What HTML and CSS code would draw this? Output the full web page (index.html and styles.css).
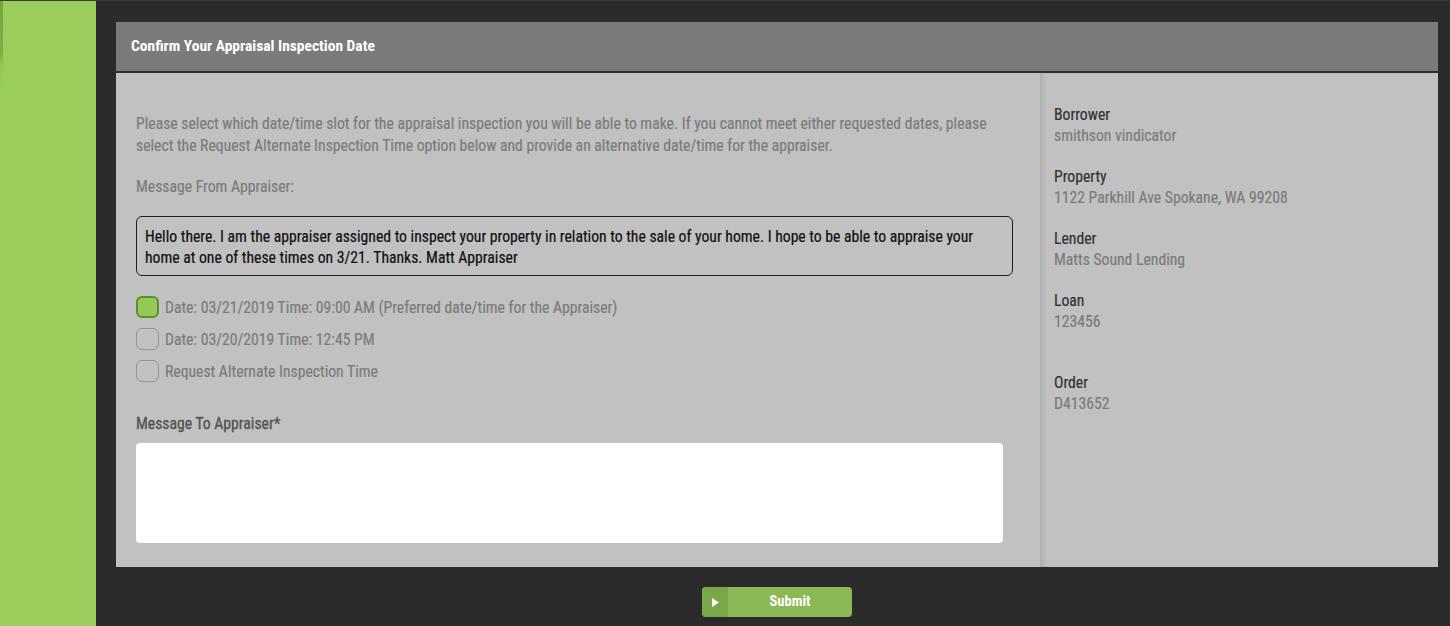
FILE: index.html
```html
<!DOCTYPE html>
<html>
<head>
<meta charset="utf-8">
<link rel="stylesheet" href="styles.css">
</head>
<body>
<div class="page">
  <aside class="sidebar"><div class="sidebar-edge"></div></aside>
  <main class="main">
    <section class="panel">
      <header class="panel-head">Confirm Your Appraisal Inspection Date</header>
      <div class="panel-body">
        <div class="form-col">
          <p class="intro">Please select which date/time slot for the appraisal inspection you will be able to make. If you cannot meet either requested dates, please select the Request Alternate Inspection Time option below and provide an alternative date/time for the appraiser.</p>
          <p class="from-label">Message From Appraiser:</p>
          <div class="message">Hello there. I am the appraiser assigned to inspect your property in relation to the sale of your home. I hope to be able to appraise your home at one of these times on 3/21. Thanks. Matt Appraiser</div>
          <ul class="options">
            <li class="option"><span class="box checked"></span>Date: 03/21/2019 Time: 09:00 AM (Preferred date/time for the Appraiser)</li>
            <li class="option"><span class="box"></span>Date: 03/20/2019 Time: 12:45 PM</li>
            <li class="option"><span class="box"></span>Request Alternate Inspection Time</li>
          </ul>
          <label class="to-label">Message To Appraiser*</label>
          <div class="textarea"></div>
        </div>
        <div class="info-col">
          <div class="info"><div class="info-label">Borrower</div><div class="info-value">smithson vindicator</div></div>
          <div class="info"><div class="info-label">Property</div><div class="info-value">1122 Parkhill Ave Spokane, WA 99208</div></div>
          <div class="info"><div class="info-label">Lender</div><div class="info-value">Matts Sound Lending</div></div>
          <div class="info"><div class="info-label">Loan</div><div class="info-value">123456</div></div>
          <div class="info info-gap"><div class="info-label">Order</div><div class="info-value">D413652</div></div>
        </div>
      </div>
    </section>
    <div class="actions">
      <button class="submit"><span class="submit-icon"><svg width="7" height="9" viewBox="0 0 7 9"><path d="M0 0 L7 4.5 L0 9 Z" fill="#fff"/></svg></span><span class="submit-text">Submit</span></button>
    </div>
  </main>
</div>
</body>
</html>
```
FILE: styles.css
```css
* { box-sizing: border-box; }
html, body { margin: 0; padding: 0; }
body {
  background: #2b2b2b;
  font-family: "Roboto Condensed", "DejaVu Sans Condensed", "Liberation Sans Narrow", Roboto, sans-serif;
  font-size: 15.7px;
  height: 626px;
  overflow: hidden;
  -webkit-text-stroke: 0.2px;
}
.page { display: flex; height: 626px; border-top: 1px solid #3a3a3a; }
.sidebar {
  width: 96px;
  flex: none;
  background: #9ccc5b;
}
.sidebar-edge {
  width: 3px;
  height: 96px;
  background: linear-gradient(#6fa63c 0%, #78b243 55%, #8fd04f 70%, #9ccc5b 100%);
}
.main { flex: 1; padding: 21px 12px 0 20px; display: flex; flex-direction: column; }
.panel { background: #c1c1c1; }
.panel-head {
  background: #7b7b7b;
  color: #fff;
  font-weight: 700;
  font-size: 15.5px;
  height: 51px;
  line-height: 49px;
  padding-left: 15px;
  border-bottom: 2px solid #2e2e2e;
  -webkit-text-stroke: 0;
}
.panel-body { display: flex; height: 494px; }
.form-col { width: 924px; padding: 40px 0 0 20px; }
.intro { margin: 0; color: #7c7c7c; line-height: 22px; width: 870px; }
.from-label { margin: 19px 0 0; color: #7c7c7c; line-height: 22px; }
.message {
  margin-top: 18px;
  width: 877px;
  border: 1px solid #1e1e1e;
  border-radius: 6px;
  padding: 9px 8px 7px;
  color: #111;
  line-height: 21px;
}
.options { list-style: none; margin: 15px 0 0; padding: 0; }
.option { display: flex; align-items: center; height: 32px; color: #7c7c7c; }
.box {
  width: 23px; height: 22px;
  border: 1px solid #959595;
  border-radius: 6px;
  margin-right: 6px;
  flex: none;
}
.box.checked { background: #93c955; border: 2px solid #5f8c31; }
.to-label { display: block; margin-top: 26px; color: #555; line-height: 22px; -webkit-text-stroke: 0.35px #555; }
.textarea {
  margin-top: 8px;
  width: 867px;
  height: 100px;
  background: #fff;
  border-radius: 4px;
}
.info-col {
  flex: 1;
  padding: 31px 0 0 14px;
  box-shadow: inset 6px 0 6px -4px rgba(0,0,0,0.12);
}
.info { margin-bottom: 20px; }
.info-gap { margin-top: 40px; }
.info-label { color: #333; line-height: 21px; }
.info-value { color: #7c7c7c; line-height: 21px; }
.actions { display: flex; justify-content: center; padding-top: 20px; }
.submit {
  width: 150px; height: 30px;
  border: 0; padding: 0;
  background: #8ab955;
  border-radius: 4px;
  display: flex;
  overflow: hidden;
  font-family: inherit;
  cursor: pointer;
}
.submit-icon {
  width: 26px; height: 30px;
  background: #7aa848;
  display: flex; align-items: center; justify-content: center;
}
.submit-text { flex: 1; color: #fff; font-weight: 700; font-size: 14.5px; line-height: 30px; text-align: center; -webkit-text-stroke: 0; }
```
